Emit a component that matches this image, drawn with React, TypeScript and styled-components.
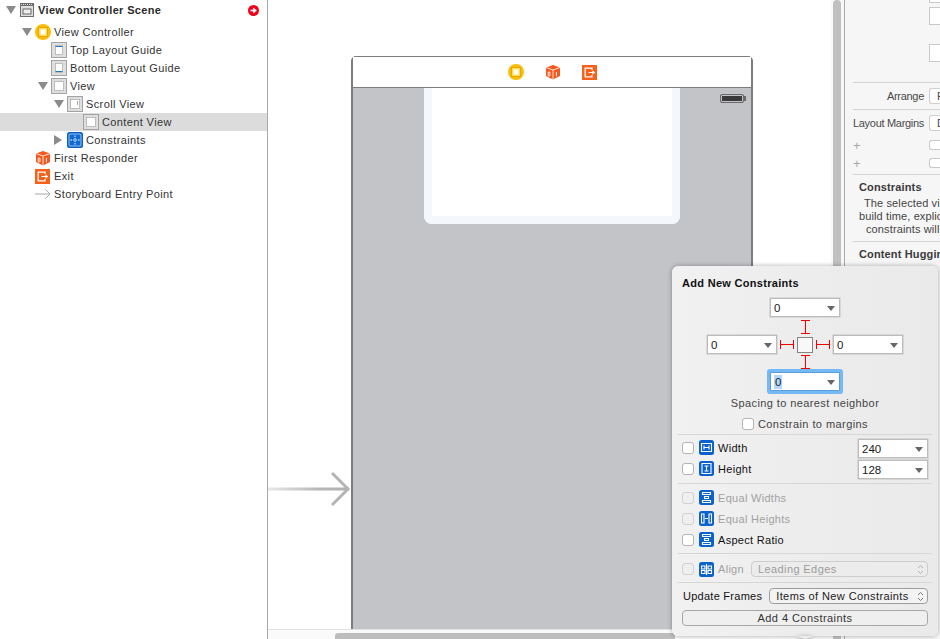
import styled, { createGlobalStyle } from 'styled-components';

const GlobalStyle = createGlobalStyle`
  html, body {
    margin: 0;
    padding: 0;
    height: 100%;
    background: #fff;
  }
  body {
    font-family: "Liberation Sans", Arial, sans-serif;
    font-size: 11px;
    color: #333;
    -webkit-font-smoothing: antialiased;
  }
`;

const Page = styled.div`
  position: relative;
  display: flex;
  width: 940px;
  height: 639px;
  overflow: hidden;
`;

/* outline */
const Outline = styled.nav`
  flex: 0 0 268px;
  box-sizing: border-box;
  padding-top: 1px;
  border-right: 1px solid #a8a8a8;
  background: #fff;
`;
const SceneRow = styled.div`
  display: flex;
  align-items: center;
  height: 18px;
  padding: 0 8px 0 6px;
  margin-bottom: 4px;
`;
const SceneDisclosureSlot = styled.span`
  flex: 0 0 14px;
  display: flex;
`;
const SceneTitle = styled.span`
  margin-left: 4px;
  font-weight: 700;
  letter-spacing: 0.35px;
  color: #2b2b2b;
  flex: 1;
`;
const Row = styled.div<{ $depth: number; $selected?: boolean }>`
  display: flex;
  align-items: center;
  height: 18px;
  padding-left: ${(p) => 6 + p.$depth * 16}px;
  background: ${(p) => (p.$selected ? '#dcdcdc' : 'transparent')};
`;
const Disclosure = styled.span<{ $state?: 'open' | 'closed' }>`
  flex: 0 0 13px;
  width: 13px;
  height: 10px;
  display: flex;
  align-items: center;
  &::before {
    content: '';
    display: ${(p) => (p.$state ? 'block' : 'none')};
    ${(p) =>
      p.$state === 'open'
        ? 'border-left: 5px solid transparent; border-right: 5px solid transparent; border-top: 8px solid #8b8b8b;'
        : 'border-top: 5px solid transparent; border-bottom: 5px solid transparent; border-left: 8px solid #8b8b8b;'}
  }
`;
const RowLabel = styled.span<{ $gap?: number }>`
  margin-left: ${(p) => p.$gap ?? 3}px;
  letter-spacing: 0.38px;
  white-space: nowrap;
`;

/* canvas */
const Stage = styled.main`
  position: relative;
  flex: 0 0 563px;
  display: flex;
  flex-direction: column;
  background: #fff;
`;
const StageScroll = styled.div`
  flex: 1;
  min-height: 0;
  overflow: hidden;
  padding: 56px 0 0 83px;
`;
const Device = styled.div`
  width: 402px;
  box-sizing: border-box;
  height: 640px;
  border: 2px solid #7c7c7c;
  border-top-width: 1px;
  border-radius: 5px 5px 0 0;
`;
const SceneDock = styled.div`
  display: flex;
  align-items: center;
  justify-content: center;
  gap: 21px;
  height: 30px;
  border-bottom: 1px solid #7c7c7c;
  background: #fff;
`;
const Screen = styled.div`
  position: relative;
  display: flex;
  justify-content: center;
  height: 100%;
  background: #c2c4c8;
`;
const ContentCard = styled.div`
  width: 256px;
  height: 136px;
  box-sizing: border-box;
  border: 8px solid #f4f7fb;
  border-top: 0;
  border-radius: 0 0 8px 8px;
  background: #fff;
`;
const Battery = styled.div`
  position: absolute;
  top: 6px;
  right: 7px;
  width: 24px;
  height: 9px;
  box-sizing: border-box;
  border: 1px solid #6a6a6a;
  border-radius: 2px;
  background: #3a3a3a;
  box-shadow: inset 0 0 0 1px #c2c4c8;
  &::after {
    content: '';
    position: absolute;
    top: 1px;
    right: -3px;
    width: 2px;
    height: 5px;
    background: #6a6a6a;
  }
`;
const EntryArrow = styled.svg`
  position: absolute;
  left: 0;
  top: 470px;
`;
const HTrack = styled.div`
  flex: 0 0 9px;
  box-sizing: border-box;
  padding: 3px 0 0 67px;
  border-top: 1px solid #e2e2e2;
  background: #fafafa;
`;
const HThumb = styled.div`
  width: 340px;
  height: 6px;
  border-radius: 3px 0 0 0;
  background: #bdbdbd;
`;
const VTrack = styled.div`
  flex: 0 0 13px;
  box-sizing: border-box;
  padding: 0 3px 0 2px;
  background: #f8f8f8;
`;
const VThumb = styled.div`
  height: 100%;
  border-radius: 4px 4px 0 0;
  background: #c0c0c0;
`;

/* inspector */
const Inspector = styled.aside`
  flex: 0 0 96px;
  box-sizing: border-box;
  border-left: 1px solid #a9a9a9;
  padding-left: 8px;
  background: #f6f6f6;
  overflow: hidden;
  color: #444;
`;
const InspectorField = styled.div<{ $height: number; $top: number }>`
  width: 30px;
  height: ${(p) => p.$height}px;
  margin: ${(p) => p.$top}px 0 0 76px;
  box-sizing: border-box;
  border: 1px solid #c8c8c8;
  border-right: 0;
  background: #fff;
`;
const Rule = styled.div<{ $top: number }>`
  height: 1px;
  margin-top: ${(p) => p.$top}px;
  background: #d3d3d3;
`;
const InspectorRow = styled.div<{ $top: number }>`
  display: flex;
  align-items: center;
  height: 16px;
  margin-top: ${(p) => p.$top}px;
  white-space: nowrap;
`;
const RowCaption = styled.span`
  flex: 0 0 72px;
  min-width: 0;
  margin-left: -1px;
  text-align: right;
  color: #4a4a4a;
  letter-spacing: -0.3px;
`;
const InspectorSelect = styled.div`
  margin-left: 5px;
  width: 30px;
  height: 16px;
  box-sizing: border-box;
  padding-left: 7px;
  line-height: 14px;
  border: 1px solid #cfcfcf;
  border-right: 0;
  border-radius: 3px 0 0 3px;
  background: #fff;
`;
const PlusRow = styled.div<{ $top: number }>`
  display: flex;
  align-items: center;
  height: 10px;
  margin-top: ${(p) => p.$top}px;
  color: #a8a8a8;
  font-size: 13px;
`;
const SmallBox = styled.span`
  margin-left: 68px;
  width: 30px;
  height: 10px;
  box-sizing: border-box;
  border: 1px solid #c8c8c8;
  border-right: 0;
  border-radius: 3px 0 0 3px;
  background: #fff;
`;
const InspectorHeading = styled.div<{ $top: number }>`
  margin: ${(p) => p.$top}px 0 0 6px;
  height: 14px;
  line-height: 14px;
  font-weight: 700;
  color: #3a3a3a;
  letter-spacing: 0.14px;
  white-space: nowrap;
`;
const InfoLine = styled.div<{ $indent: number }>`
  height: 13px;
  line-height: 13px;
  padding-left: ${(p) => p.$indent}px;
  letter-spacing: 0.12px;
  white-space: nowrap;
`;
const InfoBlock = styled.div`
  margin-top: 3px;
`;

/* popover */
const Popover = styled.section`
  position: absolute;
  left: 672px;
  top: 266px;
  width: 266px;
  height: 370px;
  box-sizing: border-box;
  padding: 10px 6px 0;
  border-radius: 6px;
  background: linear-gradient(90deg, #f1f1f1 0%, #ececec 60%, #eaeaea 100%);
  box-shadow: 0 0 5px rgba(0, 0, 0, 0.32);
  color: #222;
  &::after {
    content: '';
    position: absolute;
    left: 124px;
    bottom: -3px;
    border-left: 9px solid transparent;
    border-right: 9px solid transparent;
    border-top: 3px solid #ececec;
    filter: drop-shadow(0 1px 2px rgba(0, 0, 0, 0.5));
  }
`;
const PopoverTitle = styled.h2`
  margin: 0 0 8px 4px;
  height: 14px;
  line-height: 14px;
  font-size: 11px;
  font-weight: 700;
  letter-spacing: 0.3px;
  color: #111;
`;
const PinBlock = styled.div`
  display: flex;
  flex-direction: column;
  align-items: center;
`;
const PinMiddle = styled.div`
  display: flex;
  align-items: center;
`;
const NumberField = styled.div<{ $focused?: boolean }>`
  position: relative;
  width: 70px;
  height: 19px;
  box-sizing: border-box;
  padding-left: 3px;
  display: flex;
  align-items: center;
  font-size: 11.5px;
  color: #1a1a1a;
  background: #fff;
  border: 1px solid ${(p) => (p.$focused ? '#5a9fdc' : '#bcbcbc')};
  box-shadow: ${(p) => (p.$focused ? '0 0 0 3px #74b8f6' : '0 0 0 0.5px #c4c4c4')};
  border-radius: ${(p) => (p.$focused ? '1px' : '0')};
  &::after {
    content: '';
    position: absolute;
    right: 4px;
    top: 7px;
    border-left: 4px solid transparent;
    border-right: 4px solid transparent;
    border-top: 5px solid #666;
  }
`;
const Selected = styled.span`
  background: #b3d7ff;
  padding: 1px 1px;
`;
const PinBox = styled.div`
  width: 16px;
  height: 16px;
  box-sizing: border-box;
  border: 1px solid #858585;
  background: #f8f8f8;
`;
const PinCaption = styled.div`
  margin-top: 5px;
  height: 14px;
  line-height: 14px;
  text-align: center;
  letter-spacing: 0.4px;
  color: #444;
`;
const MarginsRow = styled.label`
  display: flex;
  align-items: center;
  justify-content: center;
  gap: 4px;
  margin-top: 7px;
  height: 14px;
  letter-spacing: 0.43px;
  color: #444;
`;
const Divider = styled.hr<{ $top: number }>`
  border: 0;
  height: 1px;
  margin: ${(p) => p.$top}px 0 0;
  background: #d6d6d6;
`;
const OptionList = styled.div<{ $top: number; $gap?: number }>`
  display: flex;
  flex-direction: column;
  gap: ${(p) => p.$gap ?? 0}px;
  margin-top: ${(p) => p.$top}px;
  padding: 0 4px;
`;
const OptionRow = styled.div`
  display: flex;
  align-items: center;
  box-sizing: border-box;
  height: 19px;
  padding-bottom: 2px;
`;
const FixedRow = styled(OptionRow)`
  height: 21px;
`;
const CompactRow = styled(OptionRow)`
  height: 16px;
  padding-bottom: 0;
`;
const Check = styled.span<{ $disabled?: boolean }>`
  flex: 0 0 12px;
  width: 12px;
  height: 12px;
  box-sizing: border-box;
  border: 1px solid ${(p) => (p.$disabled ? '#d2d2d2' : '#b4b4b4')};
  border-radius: 3px;
  background: ${(p) => (p.$disabled ? '#efefef' : '#fff')};
`;
const OptionLabel = styled.span<{ $disabled?: boolean }>`
  margin-left: 4px;
  letter-spacing: 0.3px;
  color: ${(p) => (p.$disabled ? '#a2a2a2' : '#111')};
  white-space: nowrap;
`;
const ValueField = styled(NumberField)`
  margin-left: auto;
  align-self: flex-start;
  flex-shrink: 0;
`;
const Stepper = styled.div<{ $disabled?: boolean; $left: number }>`
  position: relative;
  flex: 1;
  height: 16px;
  box-sizing: border-box;
  margin-left: ${(p) => p.$left}px;
  padding-left: 6px;
  line-height: 14px;
  letter-spacing: 0.4px;
  white-space: nowrap;
  border: 1px solid ${(p) => (p.$disabled ? '#cdcdcd' : '#9e9e9e')};
  border-radius: 4px;
  color: ${(p) => (p.$disabled ? '#9c9c9c' : '#222')};
  background: ${(p) => (p.$disabled ? '#ececec' : '#f3f3f3')};
`;
const StepperGlyph = styled.svg`
  position: absolute;
  right: 3px;
  top: 2px;
`;
const FrameCaption = styled.span`
  letter-spacing: 0.26px;
  margin-left: 1px;
  color: #111;
`;
const AddButton = styled.button`
  display: block;
  width: 246px;
  height: 16px;
  margin: 6px 0 0 4px;
  padding: 0;
  font: inherit;
  letter-spacing: 0.45px;
  line-height: 14px;
  color: #333;
  border: 1px solid #a8a8a8;
  border-radius: 4px;
  background: #efefef;
`;
const GlyphSvg = styled.svg`
  flex: 0 0 15px;
  margin-left: 5px;
`;
const StrutSvg = styled.svg`
  display: block;
`;

type FrameKind = 'plain' | 'top' | 'bottom' | 'scroll';

const FrameIcon = ({ kind }: { kind: FrameKind }) => {
  const guide = kind === 'top' || kind === 'bottom';
  return (
    <svg width="16" height="16" viewBox="0 0 16 16">
      <rect x="0.5" y="0.5" width="15" height="15" fill="#dedede" stroke="#a3a3a3" />
      <rect
        x={guide ? 4.5 : 3.5}
        y="3.5"
        width={guide ? 7 : 9}
        height="9"
        fill="#fff"
        stroke="#a9a9a9"
        strokeWidth="0.7"
      />
      {kind === 'top' && <rect x="4.500" y="4" width="7" height="1" fill="#1f78c4" />}
      {kind === 'bottom' && <rect x="4.500" y="11" width="7" height="1" fill="#1f78c4" />}
      {kind === 'scroll' && <rect x="10" y="5" width="1" height="4" fill="#a9a9a9" />}
    </svg>
  );
};

const SceneIcon = () => (
  <svg width="14" height="14" viewBox="0 0 14 14">
    <rect x="0" y="0" width="14" height="14" fill="#6e6e6e" />
    <path d="M1 1.500h12" stroke="#d8d8d8" strokeDasharray="1 1" />
    <rect x="1" y="3" width="12" height="10" fill="#e0e0e0" />
    <rect x="3" y="6" width="8" height="5" fill="#eee" stroke="#666" />
  </svg>
);

const ControllerIcon = () => (
  <svg width="16" height="16" viewBox="0 0 16 16">
    <circle cx="8" cy="8" r="8" fill="#fbbd08" />
    <rect x="3.500" y="3.500" width="9" height="9" fill="#fddc5f" stroke="#e8a800" />
    <rect x="5.500" y="5.500" width="5" height="5" fill="#fff" />
  </svg>
);

const ResponderIcon = () => (
  <svg width="16" height="16" viewBox="0 0 16 16">
    <path d="M1 3.500 8 1l7 2.500V12l-7 3.500L1 12z" fill="#f2591f" />
    <path d="M1 3.500 8 6l7-2.500M8 6v9.500" stroke="#fff" strokeWidth="0.8" fill="none" />
    <path d="M3.200 8.200h1.800v3.600H3.200zM11.400 8v4.400" stroke="#fff" strokeWidth="0.9" fill="none" />
  </svg>
);

const ExitIcon = () => (
  <svg width="15" height="15" viewBox="0 0 15 15">
    <rect width="15" height="15" fill="#f7611a" />
    <path d="M10 5V3.200H3.200v8.600H10V10" stroke="#fff" strokeWidth="1.300" fill="none" />
    <path d="M6.500 7.500h5.500M10.400 5.800l2 1.700-2 1.700" stroke="#fff" strokeWidth="1.100" fill="none" />
  </svg>
);

const ConstraintsIcon = () => (
  <svg width="16" height="16" viewBox="0 0 16 16">
    <rect x="0" y="0" width="16" height="16" rx="2.500" fill="#0a5fc4" />
    <rect x="2" y="2" width="12" height="12" rx="1" fill="#0f6ad2" stroke="#bcd8f7" strokeWidth="0.8" />
    <path d="M8 3.500v9M3.500 8h9" stroke="#fff" strokeDasharray="1.500 1" />
  </svg>
);

const EntryIcon = () => (
  <svg width="16" height="10" viewBox="0 0 16 10">
    <path d="M0 5h15M10.500 0.500 15 5l-4.500 4.500" stroke="#a8a8a8" fill="none" />
  </svg>
);

const WarningDot = () => (
  <svg width="11" height="11" viewBox="0 0 11 11">
    <circle cx="5.500" cy="5.500" r="5.500" fill="#f0001c" />
    <path d="M2.500 5.500h4M5.200 3.400l2.600 2.100-2.600 2.100" stroke="#fff" strokeWidth="1.400" fill="none" />
  </svg>
);

type GlyphKind = 'width' | 'height' | 'stack' | 'equalHeights' | 'align';

const glyphs: Record<GlyphKind, string> = {
  width: 'M2.500 3.500h10v8h-10zM5 7.500h5M5 5.500v4M10 5.500v4',
  height: 'M3 2.500h9v10H3zM5.500 5h4M5.500 10h4M7.500 5v5',
  stack: 'M3.500 2.500h8v2h-8zM5.500 6.500h4v2h-4zM3.500 10.500h8v2h-8z',
  equalHeights: 'M2.500 3h2.500v9H2.500zM10 3h2.500v9H10zM6 7.500h3',
  align: 'M7.500 2v11M2.500 4h3.500v3H2.500zM2.500 8.500h3.500v3H2.500zM9 4h3.500v3H9zM9 8.500h3.500v3H9z',
};

const ConstraintGlyph = ({ kind }: { kind: GlyphKind }) => (
  <GlyphSvg width="15" height="15" viewBox="0 0 15 15">
    <rect width="15" height="15" rx="2.500" fill="#0a62cc" />
    <path d={glyphs[kind]} fill="none" stroke="#fff" strokeWidth="1.100" />
  </GlyphSvg>
);

const VerticalStrut = ({ from }: { from: number }) => (
  <StrutSvg width="9" height="18" viewBox="0 0 9 18">
    <path d={`M0 ${from}h9M4.500 ${from}v13M0 ${from + 13}h9`} stroke="#f00000" fill="none" />
  </StrutSvg>
);

const HorizontalStrut = () => (
  <StrutSvg width="20" height="9" viewBox="0 0 20 9">
    <path d="M3.500 0v9M3.500 4.500h13M16.500 0v9" stroke="#f00000" fill="none" />
  </StrutSvg>
);

const UpDown = ({ color }: { color: string }) => (
  <StepperGlyph width="7" height="11" viewBox="0 0 7 11">
    <path d="M1 4 3.500 1.500 6 4M1 7l2.500 2.500L6 7" stroke={color} fill="none" />
  </StepperGlyph>
);

const App = () => {
  return (
    <Page>
      <GlobalStyle />
      <Outline>
        <SceneRow>
          <SceneDisclosureSlot>
            <Disclosure $state="open" />
          </SceneDisclosureSlot>
          <SceneIcon />
          <SceneTitle>View Controller Scene</SceneTitle>
          <WarningDot />
        </SceneRow>
        <Row $depth={1}>
          <Disclosure $state="open" />
          <ControllerIcon />
          <RowLabel>View Controller</RowLabel>
        </Row>
        <Row $depth={2}>
          <Disclosure />
          <FrameIcon kind="top" />
          <RowLabel>Top Layout Guide</RowLabel>
        </Row>
        <Row $depth={2}>
          <Disclosure />
          <FrameIcon kind="bottom" />
          <RowLabel>Bottom Layout Guide</RowLabel>
        </Row>
        <Row $depth={2}>
          <Disclosure $state="open" />
          <FrameIcon kind="plain" />
          <RowLabel>View</RowLabel>
        </Row>
        <Row $depth={3}>
          <Disclosure $state="open" />
          <FrameIcon kind="scroll" />
          <RowLabel>Scroll View</RowLabel>
        </Row>
        <Row $depth={4} $selected>
          <Disclosure />
          <FrameIcon kind="plain" />
          <RowLabel>Content View</RowLabel>
        </Row>
        <Row $depth={3}>
          <Disclosure $state="closed" />
          <ConstraintsIcon />
          <RowLabel>Constraints</RowLabel>
        </Row>
        <Row $depth={1}>
          <Disclosure />
          <ResponderIcon />
          <RowLabel>First Responder</RowLabel>
        </Row>
        <Row $depth={1}>
          <Disclosure />
          <ExitIcon />
          <RowLabel $gap={4}>Exit</RowLabel>
        </Row>
        <Row $depth={1}>
          <Disclosure />
          <EntryIcon />
          <RowLabel>Storyboard Entry Point</RowLabel>
        </Row>
      </Outline>

      <Stage>
        <StageScroll>
          <Device>
            <SceneDock>
              <ControllerIcon />
              <ResponderIcon />
              <ExitIcon />
            </SceneDock>
            <Screen>
              <ContentCard />
              <Battery />
            </Screen>
          </Device>
        </StageScroll>
        <HTrack>
          <HThumb />
        </HTrack>
        <EntryArrow width="84" height="38" viewBox="0 0 84 38">
          <defs>
            <linearGradient id="entryFade" x1="0" x2="1" y1="0" y2="0">
              <stop offset="0" stopColor="#e8e8e8" />
              <stop offset="0.6" stopColor="#b8b8b8" />
              <stop offset="1" stopColor="#b0b0b0" />
            </linearGradient>
          </defs>
          <rect x="0" y="17.500" width="81" height="3" fill="url(#entryFade)" />
          <path d="M64 3 80 19 64 35" stroke="#b4b4b4" strokeWidth="3" fill="none" />
        </EntryArrow>
      </Stage>

      <VTrack>
        <VThumb />
      </VTrack>

      <Inspector>
        <InspectorField $height={4} $top={-1} />
        <InspectorField $height={18} $top={4} />
        <InspectorField $height={18} $top={19} />
        <Rule $top={20} />
        <InspectorRow $top={5}>
          <RowCaption>Arrange</RowCaption>
          <InspectorSelect>F</InspectorSelect>
        </InspectorRow>
        <Rule $top={5} />
        <InspectorRow $top={5}>
          <RowCaption>Layout Margins</RowCaption>
          <InspectorSelect>D</InspectorSelect>
        </InspectorRow>
        <PlusRow $top={9}>
          +<SmallBox />
        </PlusRow>
        <PlusRow $top={8}>
          +<SmallBox />
        </PlusRow>
        <Rule $top={6} />
        <InspectorHeading $top={5}>Constraints</InspectorHeading>
        <InfoBlock>
          <InfoLine $indent={11}>The selected vi</InfoLine>
          <InfoLine $indent={6}>build time, explic</InfoLine>
          <InfoLine $indent={13}>constraints will</InfoLine>
        </InfoBlock>
        <Rule $top={5} />
        <InspectorHeading $top={5}>Content Huggin</InspectorHeading>
      </Inspector>

      <Popover>
        <PopoverTitle>Add New Constraints</PopoverTitle>
        <PinBlock>
          <NumberField>0</NumberField>
          <VerticalStrut from={3.5} />
          <PinMiddle>
            <NumberField>0</NumberField>
            <HorizontalStrut />
            <PinBox />
            <HorizontalStrut />
            <NumberField>0</NumberField>
          </PinMiddle>
          <VerticalStrut from={1.5} />
          <NumberField $focused>
            <Selected>0</Selected>
          </NumberField>
        </PinBlock>
        <PinCaption>Spacing to nearest neighbor</PinCaption>
        <MarginsRow>
          <Check />
          Constrain to margins
        </MarginsRow>
        <Divider $top={3} />
        <OptionList $top={4} $gap={2}>
          <OptionRow>
            <Check />
            <ConstraintGlyph kind="width" />
            <OptionLabel>Width</OptionLabel>
            <ValueField>240</ValueField>
          </OptionRow>
          <OptionRow>
            <Check />
            <ConstraintGlyph kind="height" />
            <OptionLabel>Height</OptionLabel>
            <ValueField>128</ValueField>
          </OptionRow>
        </OptionList>
        <Divider $top={4} />
        <OptionList $top={4}>
          <FixedRow>
            <Check $disabled />
            <ConstraintGlyph kind="stack" />
            <OptionLabel $disabled>Equal Widths</OptionLabel>
          </FixedRow>
          <FixedRow>
            <Check $disabled />
            <ConstraintGlyph kind="equalHeights" />
            <OptionLabel $disabled>Equal Heights</OptionLabel>
          </FixedRow>
          <FixedRow>
            <Check />
            <ConstraintGlyph kind="stack" />
            <OptionLabel>Aspect Ratio</OptionLabel>
          </FixedRow>
        </OptionList>
        <Divider $top={2} />
        <OptionList $top={7}>
          <CompactRow>
            <Check $disabled />
            <ConstraintGlyph kind="align" />
            <OptionLabel $disabled>Align</OptionLabel>
            <Stepper $disabled $left={7}>
              Leading Edges
              <UpDown color="#b0b0b0" />
            </Stepper>
          </CompactRow>
        </OptionList>
        <Divider $top={5} />
        <OptionList $top={5}>
          <CompactRow>
            <FrameCaption>Update Frames</FrameCaption>
            <Stepper $left={7}>
              Items of New Constraints
              <UpDown color="#777" />
            </Stepper>
          </CompactRow>
        </OptionList>
        <AddButton>Add 4 Constraints</AddButton>
      </Popover>
    </Page>
  );
};

export default App;
